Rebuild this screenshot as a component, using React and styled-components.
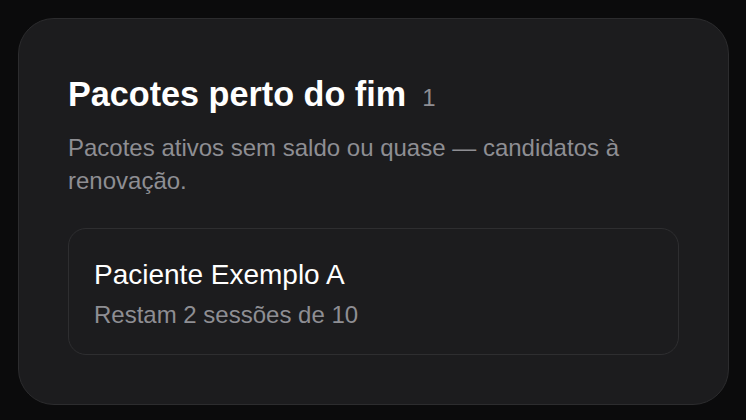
import React from "react"
import styled, { createGlobalStyle } from "styled-components"

const GlobalStyle = createGlobalStyle`
  html, body {
    margin: 0;
    background: #0b0b0c;
    font-family: "Liberation Sans", Arial, sans-serif;
  }
`

const Page = styled.div`
  padding: 18px 17px 14px 18px;
`

const Panel = styled.section`
  background: #1c1c1e;
  border: 1px solid #2c2c2e;
  border-radius: 36px;
  padding: 55px 49px 49px 49px;
`

const Header = styled.div`
  display: flex;
  align-items: baseline;
  gap: 16px;
`

const Title = styled.h2`
  margin: 0;
  font-size: 34.2px;
  font-weight: 700;
  color: #ffffff;
  line-height: 1.2;
`

const Count = styled.span`
  font-size: 24px;
  color: #8e8e93;
`

const Description = styled.p`
  margin: 16px 0 31px;
  font-size: 24px;
  line-height: 33px;
  color: #8e8e93;
`

const Item = styled.div`
  border: 1px solid #2e2e30;
  border-radius: 18px;
  padding: 29px 25px 25px;
  display: flex;
  flex-direction: column;
  gap: 9px;
`

const ItemName = styled.div`
  font-size: 28px;
  line-height: 1.2;
  color: #ffffff;
`

const ItemMeta = styled.div`
  font-size: 24px;
  line-height: 1.2;
  color: #8e8e93;
`

const App = () => {
  return (
    <Page>
      <GlobalStyle />
      <Panel>
        <Header>
          <Title>Pacotes perto do fim</Title>
          <Count>1</Count>
        </Header>
        <Description>
          Pacotes ativos sem saldo ou quase — candidatos à renovação.
        </Description>
        <Item>
          <ItemName>Paciente Exemplo A</ItemName>
          <ItemMeta>Restam 2 sessões de 10</ItemMeta>
        </Item>
      </Panel>
    </Page>
  )
}

export default App
